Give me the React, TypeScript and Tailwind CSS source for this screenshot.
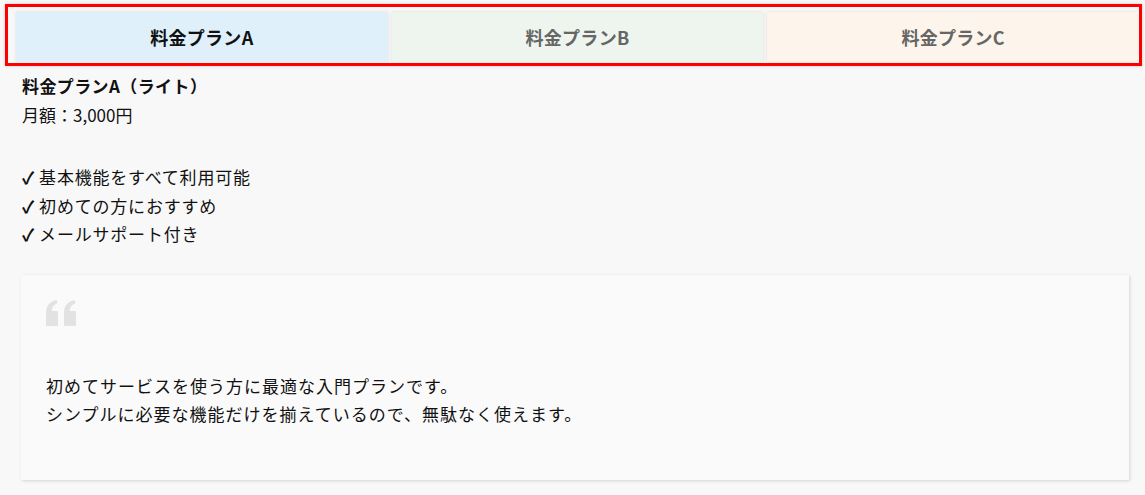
import React from "react";

const tabs = [
  { label: "料金プランA", bg: "bg-[#dff0fa]", text: "text-[#111]" },
  { label: "料金プランB", bg: "bg-[#eef5ef]", text: "text-[#666]" },
  { label: "料金プランC", bg: "bg-[#fdf5eb]", text: "text-[#666]" },
];

const features = ["基本機能をすべて利用可能", "初めての方におすすめ", "メールサポート付き"];

const QuoteMark = () => (
  <svg width="30" height="26" viewBox="0 0 30 26" fill="#e2e2e2">
    <path d="M0 24V13C0 6 3.5 1.5 10.5 0L11.8 3C8 4.3 6 6.8 5.6 11H10.5C11.4 11 12 11.6 12 12.5V24.5C12 25.4 11.4 26 10.5 26H1.5C0.6 26 0 25.4 0 24.5Z" />
    <path d="M18 24V13C18 6 21.5 1.5 28.5 0L29.8 3C26 4.3 24 6.8 23.6 11H28.5C29.4 11 30 11.6 30 12.5V24.5C30 25.4 29.4 26 28.5 26H19.5C18.6 26 18 25.4 18 24.5Z" />
  </svg>
);

const App = () => {
  return (
    <div className="min-h-screen bg-[#f8f8f8] font-['Noto_Sans_CJK_JP',sans-serif] text-[17px] leading-[28.5px] text-[#111]">
      {/* Tab list (focused) */}
      <div className="pt-1 pl-[5px] pr-[3px]">
        <div className="flex h-[62px] gap-1 border-[3px] border-[#ff0000] bg-[#f8f8f8] pt-[5px] pb-px pl-2 shadow-[0_0_3px_rgba(0,0,0,0.2)]">
          {tabs.map((t) => (
            <div
              key={t.label}
              className={`flex flex-1 items-center justify-center ${t.bg} ${t.text} text-[18px] font-bold tracking-[0.3px] shadow-[0_0_3px_rgba(0,0,0,0.12)]`}
            >
              {t.label}
            </div>
          ))}
        </div>
      </div>

      {/* Panel */}
      <div className="pt-[6px] pl-[21px] pr-4">
        <div className="pl-px">
          <p className="font-bold tracking-[0.4px]">料金プランA（ライト）</p>
          <p>月額：3,000円</p>
          <ul className="mt-[34px] tracking-[0.8px]">
            {features.map((f) => (
              <li key={f} className="flex items-center">
                <span className="mr-[4px] font-bold">✓</span>
                {f}
              </li>
            ))}
          </ul>
        </div>

        <div className="mt-[26px] h-[205px] bg-[#fafafa] px-[25px] pt-[25px] shadow-[1px_1px_3px_rgba(0,0,0,0.15)]">
          <QuoteMark />
          <p className="mt-[46px] tracking-[1px]">
            初めてサービスを使う方に最適な入門プランです。
            <br />
            シンプルに必要な機能だけを揃えているので、無駄なく使えます。
          </p>
        </div>
      </div>
    </div>
  );
};

export default App;
